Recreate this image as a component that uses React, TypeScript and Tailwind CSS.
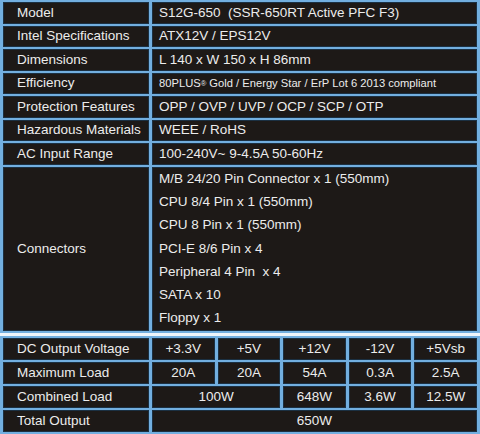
import React from 'react';

const specs: [string, React.ReactNode][] = [
  ['Model', 'S12G-650  (SSR-650RT Active PFC F3)'],
  ['Intel Specifications', 'ATX12V / EPS12V'],
  ['Dimensions', 'L 140 x W 150 x H 86mm'],
  [
    'Efficiency',
    <span className="text-[11.2px]">
      80PLUS<sup className="text-[7.5px] relative -top-[1px]">®</sup> Gold / Energy Star / ErP Lot 6 2013 compliant
    </span>,
  ],
  ['Protection Features', 'OPP / OVP / UVP / OCP / SCP / OTP'],
  ['Hazardous Materials', 'WEEE / RoHS'],
  ['AC Input Range', '100-240V~ 9-4.5A 50-60Hz'],
];

const connectors = [
  'M/B 24/20 Pin Connector x 1 (550mm)',
  'CPU 8/4 Pin x 1 (550mm)',
  'CPU 8 Pin x 1 (550mm)',
  'PCI-E 8/6 Pin x 4',
  'Peripheral 4 Pin  x 4',
  'SATA x 10',
  'Floppy x 1',
];

const cell = 'bg-[#1d1917] border border-[#1b3042] flex items-center';

export default function App() {
  return (
    <div
      className="w-[480px] h-[434px] bg-[#72afe0] px-[3px] pt-[2px] text-[13.5px] text-[#ececec] whitespace-pre"
      style={{ fontFamily: '"Liberation Sans", Arial, sans-serif' }}
    >
      {/* main spec table */}
      <div className="grid grid-cols-[146px_1fr] gap-x-[3px] gap-y-[2px]">
        {specs.map(([label, value]) => (
          <React.Fragment key={label}>
            <div className={`${cell} h-[21.5px] pl-[13px]`}>{label}</div>
            <div className={`${cell} h-[21.5px] pl-[6px]`}>{value}</div>
          </React.Fragment>
        ))}
        <div className={`${cell} h-[164.5px] pl-[13px]`}>Connectors</div>
        <div className={`${cell} h-[164.5px] pl-[6px] flex-col items-start justify-center`}>
          {connectors.map((c) => (
            <div key={c} className="h-[23.5px] flex items-center">
              {c}
            </div>
          ))}
        </div>
      </div>

      {/* separator */}
      <div className="-mx-[3px] my-[2px] h-[3px] bg-[#eef5fb]" />

      {/* DC output table */}
      <div className="grid grid-cols-[146px_repeat(5,1fr)] gap-x-[3px] gap-y-[2px]">
        <div className={`${cell} h-[22px] pl-[13px]`}>DC Output Voltage</div>
        {['+3.3V', '+5V', '+12V', '-12V', '+5Vsb'].map((v) => (
          <div key={v} className={`${cell} h-[22px] justify-center`}>{v}</div>
        ))}

        <div className={`${cell} h-[22px] pl-[13px]`}>Maximum Load</div>
        {['20A', '20A', '54A', '0.3A', '2.5A'].map((v, i) => (
          <div key={i} className={`${cell} h-[22px] justify-center`}>{v}</div>
        ))}

        <div className={`${cell} h-[22px] pl-[13px]`}>Combined Load</div>
        <div className={`${cell} h-[22px] justify-center col-span-2`}>100W</div>
        <div className={`${cell} h-[22px] justify-center`}>648W</div>
        <div className={`${cell} h-[22px] justify-center`}>3.6W</div>
        <div className={`${cell} h-[22px] justify-center`}>12.5W</div>

        <div className={`${cell} h-[22px] pl-[13px]`}>Total Output</div>
        <div className={`${cell} h-[22px] justify-center col-span-5`}>650W</div>
      </div>
    </div>
  );
}
